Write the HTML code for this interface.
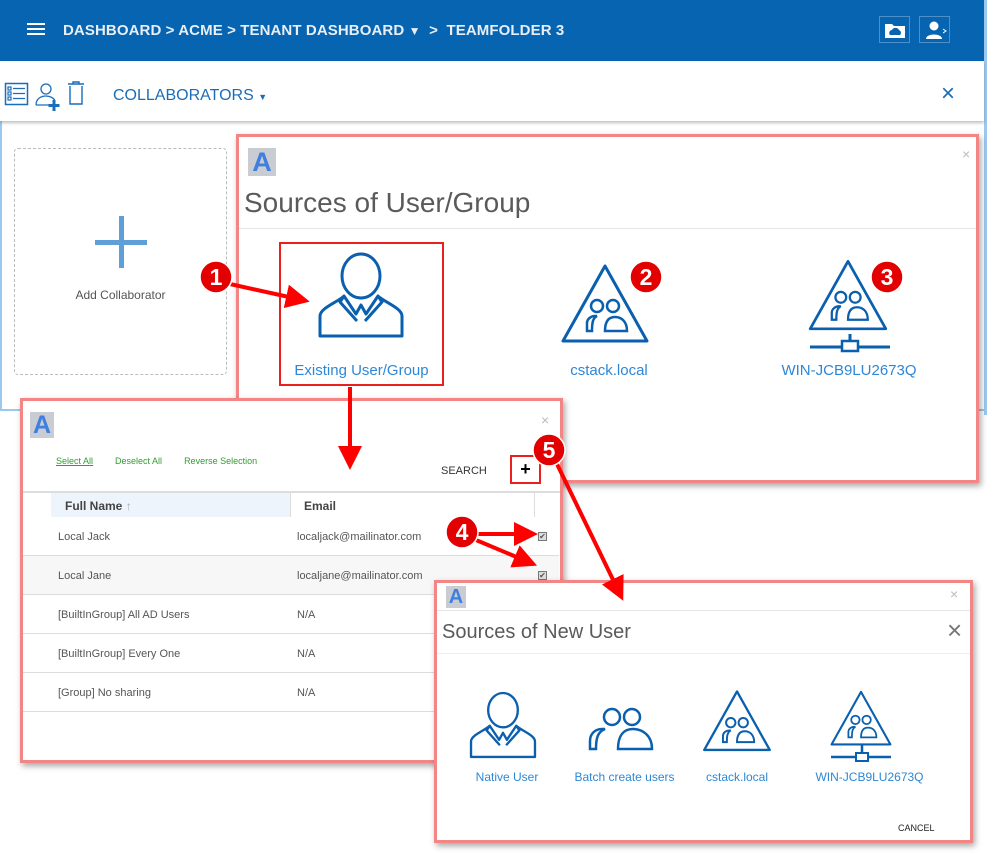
<!DOCTYPE html>
<html><head><meta charset="utf-8"><style>
*{box-sizing:border-box;margin:0;padding:0}
body{width:987px;height:854px;overflow:hidden;background:#fff;font-family:"Liberation Sans",sans-serif;position:relative}
.abs{position:absolute}
.hdr{left:0;top:0;width:984px;height:61px;background:#0664b0}
.crumb{left:63px;top:22px;color:#e8eef6;font-weight:bold;font-size:15px;letter-spacing:.1px}
.dlg{position:absolute;background:#fff;border:3px solid #f48585;box-shadow:2px 3px 6px rgba(0,0,0,.35)}
.logo{position:absolute;width:28px;height:28px;background:#c9ccd3;color:#3f7fe0;font-weight:bold;font-size:27px;line-height:29px;text-align:center}
.x{position:absolute;color:#bbb;font-size:14px}
.lbl{position:absolute;color:#2d87d6;font-size:15px;text-align:center}
.lbl2{position:absolute;color:#2d87d6;font-size:12px;text-align:center}
.row{position:absolute;left:0;width:536px;height:39px;border-bottom:1px solid #ddd;font-size:11px;color:#555}
.row span{position:absolute;top:14px}
.ck{position:absolute;left:515px;top:15px;width:9px;height:9px;border:1px solid #777;background:#ddd;font-size:8px;line-height:8px;text-align:center}
</style></head><body>
<div class="abs hdr"></div>
<div class="abs" style="left:984px;top:0;width:3px;height:415px;background:#9cc8ef"></div>
<div class="abs" style="left:0;top:61px;width:2px;height:350px;background:#9cc8ef"></div>
<div class="abs" style="left:0;top:409px;width:984px;height:2px;background:#9cc8ef"></div>
<div class="abs" style="left:27px;top:23px;width:18px;height:2px;background:#fff;box-shadow:0 5px 0 #fff,0 10px 0 #fff"></div>
<div class="abs crumb">DASHBOARD &gt; ACME &gt; TENANT DASHBOARD <span style="font-size:12px">▼</span> &nbsp;&gt;&nbsp; TEAMFOLDER 3</div>
<div class="abs" style="left:879px;top:16px;width:31px;height:27px;border:1px solid #4d8fc8">
<svg width="31" height="27"><path d="M5 7h7l2 2h11v12H5z" fill="#fff"/><path d="M10 18a3 3 0 0 1 2-5a4 4 0 0 1 7 0a3 3 0 0 1 1 5z" fill="#0664b0"/></svg></div>
<div class="abs" style="left:919px;top:16px;width:31px;height:27px;border:1px solid #4d8fc8">
<svg width="31" height="27"><circle cx="14" cy="9" r="4.5" fill="#fff"/><path d="M6 22c0-6 16-6 16 0z" fill="#fff"/><path d="M23 12l3 2-3 2" stroke="#fff" fill="none"/></svg></div>
<div class="abs" style="left:0;top:61px;width:984px;height:60px;background:#fff;box-shadow:0 2px 3px rgba(0,0,0,.25)"></div>
<svg class="abs" style="left:4px;top:80px" width="84" height="32">
<rect x="1.5" y="3.5" width="22" height="21" fill="none" stroke="#1a6db8" stroke-width="1.5"/>
<g stroke="#1a6db8" stroke-width="1.2"><rect x="4" y="7" width="3" height="3" fill="none"/><rect x="4" y="12" width="3" height="3" fill="none"/><rect x="4" y="17" width="3" height="3" fill="none"/><path d="M9 8.5h12M9 13.5h12M9 18.5h12"/></g>
<circle cx="42" cy="9" r="5" fill="none" stroke="#1a6db8" stroke-width="1.3"/><path d="M32 25c0-7 6-9 10-9s8 2 9 5M32 25h14" stroke="#1a6db8" stroke-width="1.3" fill="none"/>
<path d="M50 20v11M44.5 25.5h11" stroke="#1a6db8" stroke-width="3"/>
<path d="M64 4h16M69 4v-2h6v2M66 6v18h12v-18" stroke="#1a6db8" stroke-width="1.4" fill="none"/>
</svg>
<div class="abs" style="left:113px;top:87px;color:#1a6db8;font-size:16px">COLLABORATORS <span style="font-size:9px">▼</span></div>
<div class="abs" style="left:941px;top:80px;color:#1a6db8;font-size:24px;font-weight:300">×</div>
<div class="abs" style="left:14px;top:148px;width:213px;height:227px;border:1px dashed #bbb;border-radius:4px"></div>
<div class="abs" style="left:119px;top:216px;width:5px;height:52px;background:#5e9fd8"></div>
<div class="abs" style="left:95px;top:240px;width:52px;height:5px;background:#5e9fd8"></div>
<div class="abs" style="left:14px;top:288px;width:213px;text-align:center;font-size:12px;color:#555">Add Collaborator</div>
<div class="dlg" style="left:236px;top:134px;width:743px;height:349px">
<div class="logo" style="left:9px;top:11px">A</div>
<div class="x" style="left:723px;top:9px">×</div>
<div class="abs" style="left:5px;top:50px;font-size:28px;color:#5a5a5a">Sources of User/Group</div>
<div class="abs" style="left:0;top:91px;width:737px;height:1px;background:#e6e6e6"></div>
<div class="abs" style="left:40px;top:105px;width:165px;height:144px;border:2px solid #e8211f"></div>
<div class="lbl" style="left:40px;top:225px;width:165px">Existing User/Group</div>
<div class="lbl" style="left:300px;top:225px;width:140px">cstack.local</div>
<div class="lbl" style="left:525px;top:225px;width:170px">WIN-JCB9LU2673Q</div>
</div>
<div class="dlg" style="left:20px;top:398px;width:543px;height:365px">
<div class="logo" style="left:7px;top:11px;width:24px;height:26px;font-size:25px;line-height:27px">A</div>
<div class="x" style="left:518px;top:11px">×</div>
<div class="abs" style="left:33px;top:55px;font-size:9px;color:#2f9e2f"><u>Select All</u><span style="margin-left:22px">Deselect All</span><span style="margin-left:22px">Reverse Selection</span></div>
<div class="abs" style="left:418px;top:64px;font-size:11px;color:#333">SEARCH</div>
<div class="abs" style="left:487px;top:54px;width:31px;height:29px;border:2px solid #e8211f;text-align:center;font-weight:bold;font-size:18px;line-height:25px">+</div>
<div class="abs" style="left:0;top:90px;width:537px;height:2px;background:#ddd"></div>
<div class="abs" style="left:28px;top:92px;width:239px;height:24px;background:#eef4fb;font-size:12px;font-weight:bold;color:#444;padding:6px 0 0 14px">Full Name <span style="font-weight:normal;color:#aaa">↑</span></div>
<div class="abs" style="left:267px;top:92px;width:245px;height:24px;border-left:1px solid #ddd;border-right:1px solid #ddd;font-size:12px;font-weight:bold;color:#444;padding:6px 0 0 13px">Email</div>
<div style="position:absolute;left:0;top:116px">
<div class="row" style="top:0"><span style="left:35px">Local Jack</span><span style="left:274px">localjack@mailinator.com</span><div class="ck">✔</div></div>
<div class="row" style="top:39px;background:#f7f7f7"><span style="left:35px">Local Jane</span><span style="left:274px">localjane@mailinator.com</span><div class="ck">✔</div></div>
<div class="row" style="top:78px"><span style="left:35px">[BuiltInGroup] All AD Users</span><span style="left:274px">N/A</span></div>
<div class="row" style="top:117px"><span style="left:35px">[BuiltInGroup] Every One</span><span style="left:274px">N/A</span></div>
<div class="row" style="top:156px"><span style="left:35px">[Group] No sharing</span><span style="left:274px">N/A</span></div>
</div>
</div>
<div class="dlg" style="left:434px;top:580px;width:539px;height:263px">
<div class="logo" style="left:9px;top:3px;width:20px;height:22px;font-size:20px;line-height:22px">A</div>
<div class="x" style="left:513px;top:3px">×</div>
<div class="abs" style="left:0;top:27px;width:533px;height:1px;background:#e6e6e6"></div>
<div class="abs" style="left:5px;top:38px;font-size:20px;color:#5a5a5a">Sources of New User</div>
<div class="abs" style="left:510px;top:32px;font-size:26px;color:#777;font-weight:300">×</div>
<div class="abs" style="left:0;top:70px;width:533px;height:1px;background:#eee"></div>
<div class="lbl2" style="left:20px;top:187px;width:100px">Native User</div>
<div class="lbl2" style="left:125px;top:187px;width:125px">Batch create users</div>
<div class="lbl2" style="left:260px;top:187px;width:80px">cstack.local</div>
<div class="lbl2" style="left:370px;top:187px;width:125px">WIN-JCB9LU2673Q</div>
<div class="abs" style="left:461px;top:240px;font-size:9px;color:#222">CANCEL</div>
</div>
<svg class="abs" style="left:0;top:0" width="987" height="854">
<defs>
<g id="user"><ellipse cx="0" cy="-28" rx="19" ry="22" fill="none" stroke="#0a5fae" stroke-width="3"/><path d="M-41 32v-20c0-8 18-14 24-20l12 18 5-9 5 9 12-18c6 6 24 12 24 20v20z M-17 -8l-4 6 17 19M17 -8l4 6-17 19" fill="none" stroke="#0a5fae" stroke-width="3" stroke-linejoin="round"/></g>
<g id="tri"><path d="M0 -43L-42 32H42z" fill="none" stroke="#0a5fae" stroke-width="3" stroke-linejoin="round"/><circle cx="-8" cy="-3" r="6" fill="none" stroke="#0a5fae" stroke-width="2.5"/><circle cx="8" cy="-3" r="6" fill="none" stroke="#0a5fae" stroke-width="2.5"/><path d="M-18 22v-8c0-4 4-7 8-7h2c-4 2-5 6-5 15zM0 22c0-10 4-14 10-14s12 4 12 14z" fill="none" stroke="#0a5fae" stroke-width="2.5"/></g>
<marker id="ah" markerWidth="6" markerHeight="6" refX="3" refY="3" orient="auto"><path d="M0 0L6 3L0 6z" fill="#f00"/></marker>
</defs>
<use href="#user" transform="translate(361,304)"/>
<use href="#tri" transform="translate(605,309)"/>
<g transform="translate(848,300)"><use href="#tri" transform="scale(0.9)"/><path d="M-38 47h80M2 34v8" stroke="#0a5fae" stroke-width="3"/><rect x="-6" y="41" width="16" height="10" fill="#fff" stroke="#0a5fae" stroke-width="2.5"/></g>
<use href="#user" transform="translate(503,732) scale(0.78)"/>
<g transform="translate(621,722)" fill="none" stroke="#0a5fae" stroke-width="2.5"><circle cx="-9" cy="-5" r="8"/><circle cx="11" cy="-5" r="8"/><path d="M-31 27v-8c0-8 6-12 12-12h3c-7 3-9 8-9 20zM-3 27c0-14 6-20 15-20s19 6 19 20z"/></g>
<use href="#tri" transform="translate(737,725) scale(0.78)"/>
<g transform="translate(861,722)"><use href="#tri" transform="scale(0.7)"/><path d="M-30 35h60M1 23v8" stroke="#0a5fae" stroke-width="2.5"/><rect x="-5" y="31" width="12" height="8" fill="#fff" stroke="#0a5fae" stroke-width="2"/></g>
<g stroke="#f00" stroke-width="4" fill="none">
<path d="M230 284L298 299" marker-end="url(#ah)"/>
<path d="M350 387V458" marker-end="url(#ah)"/>
<path d="M476 534H526" marker-end="url(#ah)"/>
<path d="M476 540L526 561" marker-end="url(#ah)"/>
<path d="M556 462L618 590" marker-end="url(#ah)"/>
</g>
<g font-family="Liberation Sans" font-weight="bold" font-size="23" fill="#fff" text-anchor="middle">
<circle cx="216" cy="277" r="16" fill="#e30000" stroke="#fff" stroke-width="1.5"/><text x="216" y="285">1</text>
<circle cx="646" cy="277" r="16" fill="#e30000" stroke="#fff" stroke-width="1.5"/><text x="646" y="285">2</text>
<circle cx="887" cy="277" r="16" fill="#e30000" stroke="#fff" stroke-width="1.5"/><text x="887" y="285">3</text>
<circle cx="462" cy="532" r="16" fill="#e30000" stroke="#fff" stroke-width="1.5"/><text x="462" y="540">4</text>
<circle cx="549" cy="450" r="16" fill="#e30000" stroke="#fff" stroke-width="1.5"/><text x="549" y="458">5</text>
</g>
</svg>
</body></html>
